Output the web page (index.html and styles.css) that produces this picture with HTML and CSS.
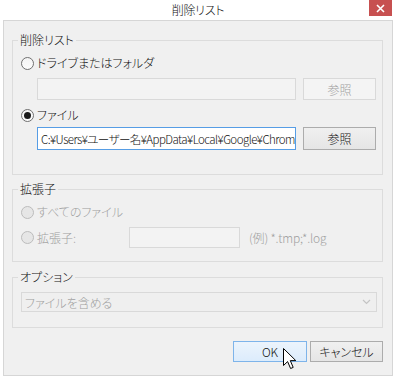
FILE: index.html
```html
<!DOCTYPE html>
<html lang="ja">
<head>
    <meta charset="UTF-8">
    <title>削除リスト</title>
    <link rel="stylesheet" href="styles.css">
</head>
<body>
    <div class="window">
        <div class="titlebar">
            <span></span>
            <span class="title">削除リスト</span>
            <span class="close">
                <svg width="9" height="9" viewBox="0 0 9 9"><path d="M1 1L8 8M8 1L1 8" stroke="#fff" stroke-width="1.6"/></svg>
            </span>
        </div>

        <div class="client">
            <fieldset class="group group-list">
                <legend>削除リスト</legend>
                <div class="radio first">
                    <span class="dot"></span>
                    <span>ドライブまたはフォルダ</span>
                </div>
                <div class="path-row first">
                    <div class="textbox disabled"></div>
                    <div class="btn disabled">参照</div>
                </div>
                <div class="radio second">
                    <span class="dot checked"></span>
                    <span>ファイル</span>
                </div>
                <div class="path-row second">
                    <div class="textbox focused"><span class="path">C:¥Users¥ユーザー名¥AppData¥Local¥Google¥Chrom</span></div>
                    <div class="btn">参照</div>
                </div>
            </fieldset>

            <fieldset class="group group-ext">
                <legend>拡張子</legend>
                <div class="radio first off">
                    <span class="dot"></span>
                    <span>すべてのファイル</span>
                </div>
                <div class="ext-row">
                    <div class="radio off ext-label">
                        <span class="dot"></span>
                        <span>拡張子:</span>
                    </div>
                    <div class="textbox disabled ext-box"></div>
                    <span class="hint">(例) *.tmp;*.log</span>
                </div>
            </fieldset>

            <fieldset class="group group-opt">
                <legend>オプション</legend>
                <div class="combo">
                    <span>ファイルを含める</span>
                    <svg width="9" height="6" viewBox="0 0 9 6"><path d="M1 1L4.5 4.5L8 1" fill="none" stroke="#c4c4c4" stroke-width="1.2"/></svg>
                </div>
            </fieldset>

            <div class="actions">
                <div class="btn hover ok">OK</div>
                <div class="btn cancel">キャンセル</div>
            </div>
        </div>

        <svg class="cursor" width="14" height="22" viewBox="0 0 14 22">
            <path d="M0.5 0.5L0.5 17.5L4.6 13.6L7.6 20.5L10.2 19.4L7.3 12.6L12.8 12.6Z" fill="#fff" stroke="#000" stroke-width="1" stroke-linejoin="miter"/>
        </svg>
    </div>
</body>
</html>
```

FILE: styles.css
```css
body {
    margin: 0;
    background: #fff;
    font-family: "Noto Sans CJK JP", sans-serif;
    font-size: 12px;
    font-weight: 300;
    font-feature-settings: "palt";
    color: #111;
}

.window {
    width: 396px;
    height: 379px;
    position: relative;
    overflow: hidden;
}

.titlebar {
    height: 20px;
    display: grid;
    grid-template-columns: 1fr auto 1fr;
    align-items: start;
}

.title {
    line-height: 20px;
    font-size: 12px;
    letter-spacing: -0.3px;
}

.close {
    justify-self: end;
    margin-right: 4px;
    width: 23px;
    height: 16px;
    background: #c75050;
    display: flex;
    align-items: center;
    justify-content: center;
}

.client {
    margin: 0 3px;
    height: 356px;
    box-sizing: border-box;
    border: 1px solid #d6d6d6;
    background: #f0f0f0;
    padding: 12px 9px 0 8px;
}

.group {
    margin: 0;
    padding: 0;
    border: 1px solid #dcdcdc;
    min-inline-size: 0;
}

.group legend {
    margin-left: 5px;
    padding: 0 2px;
    line-height: 14px;
    font-size: 12px;
}

.group-list {
    padding-bottom: 24px;
}

.group-ext {
    margin-top: 7px;
    padding-bottom: 13px;
}

.group-opt {
    margin-top: 8px;
    padding-bottom: 15px;
}

.radio {
    display: flex;
    align-items: center;
    gap: 3px;
    height: 16px;
    margin-left: 8px;
    line-height: 16px;
}

.radio.first {
    margin-top: 8px;
}

.radio.second {
    margin-top: 7px;
}

.radio.off {
    color: #a0a0a0;
}

.dot {
    width: 13px;
    height: 13px;
    box-sizing: border-box;
    border: 1px solid #707070;
    border-radius: 50%;
    background: linear-gradient(#f4f4f4, #fcfcfc);
    display: flex;
    align-items: center;
    justify-content: center;
    flex: none;
}

.dot.checked::after {
    content: "";
    width: 7px;
    height: 7px;
    border-radius: 50%;
    background: #1a1a1a;
}

.radio.off .dot {
    border-color: #bcbcbc;
    background: #e6e6e6;
}

.path-row {
    display: flex;
    gap: 7px;
    margin-left: 24px;
}

.path-row.first {
    margin-top: 7px;
    height: 22px;
}

.path-row.second {
    margin-top: 4px;
    height: 23px;
}

.textbox {
    width: 259px;
    box-sizing: border-box;
    border: 1px solid #abadb3;
    background: #fff;
    padding: 0 1px 0 3px;
    white-space: nowrap;
    overflow: hidden;
    display: flex;
    align-items: center;
}

.path {
    font-size: 11.5px;
    letter-spacing: -0.55px;
}

.textbox.focused {
    border-color: #569de5;
}

.textbox.disabled {
    border-color: #d9d9d9;
    background: #f3f3f3;
}

.btn {
    width: 73px;
    box-sizing: border-box;
    border: 1px solid #acacac;
    background: linear-gradient(#f0f0f0, #e5e5e5);
    display: flex;
    align-items: center;
    justify-content: center;
}

.btn.disabled {
    border-color: #d9d9d9;
    background: #f4f4f4;
    color: #a0a0a0;
}

.btn.hover {
    border-color: #7eb4ea;
    background: linear-gradient(#ecf4fc, #dcecfc);
}

.ext-row {
    display: flex;
    align-items: center;
    margin-top: 7px;
    height: 21px;
}

.ext-label {
    width: 108px;
}

.ext-box {
    width: 111px;
    height: 21px;
}

.hint {
    margin-left: 9px;
    color: #a0a0a0;
    letter-spacing: -0.2px;
}

.combo {
    margin: 8px 5px 0 8px;
    height: 20px;
    box-sizing: border-box;
    border: 1px solid #d9d9d9;
    background: #efefef;
    color: #a0a0a0;
    display: flex;
    align-items: center;
    justify-content: space-between;
    padding: 0 5px 0 3px;
}

.actions {
    display: flex;
    justify-content: flex-end;
    gap: 3px;
    margin-top: 13px;
}

.actions .btn {
    height: 21px;
}

.actions .ok {
    width: 74px;
}

.cursor {
    position: absolute;
    left: 283px;
    top: 348px;
}
```
